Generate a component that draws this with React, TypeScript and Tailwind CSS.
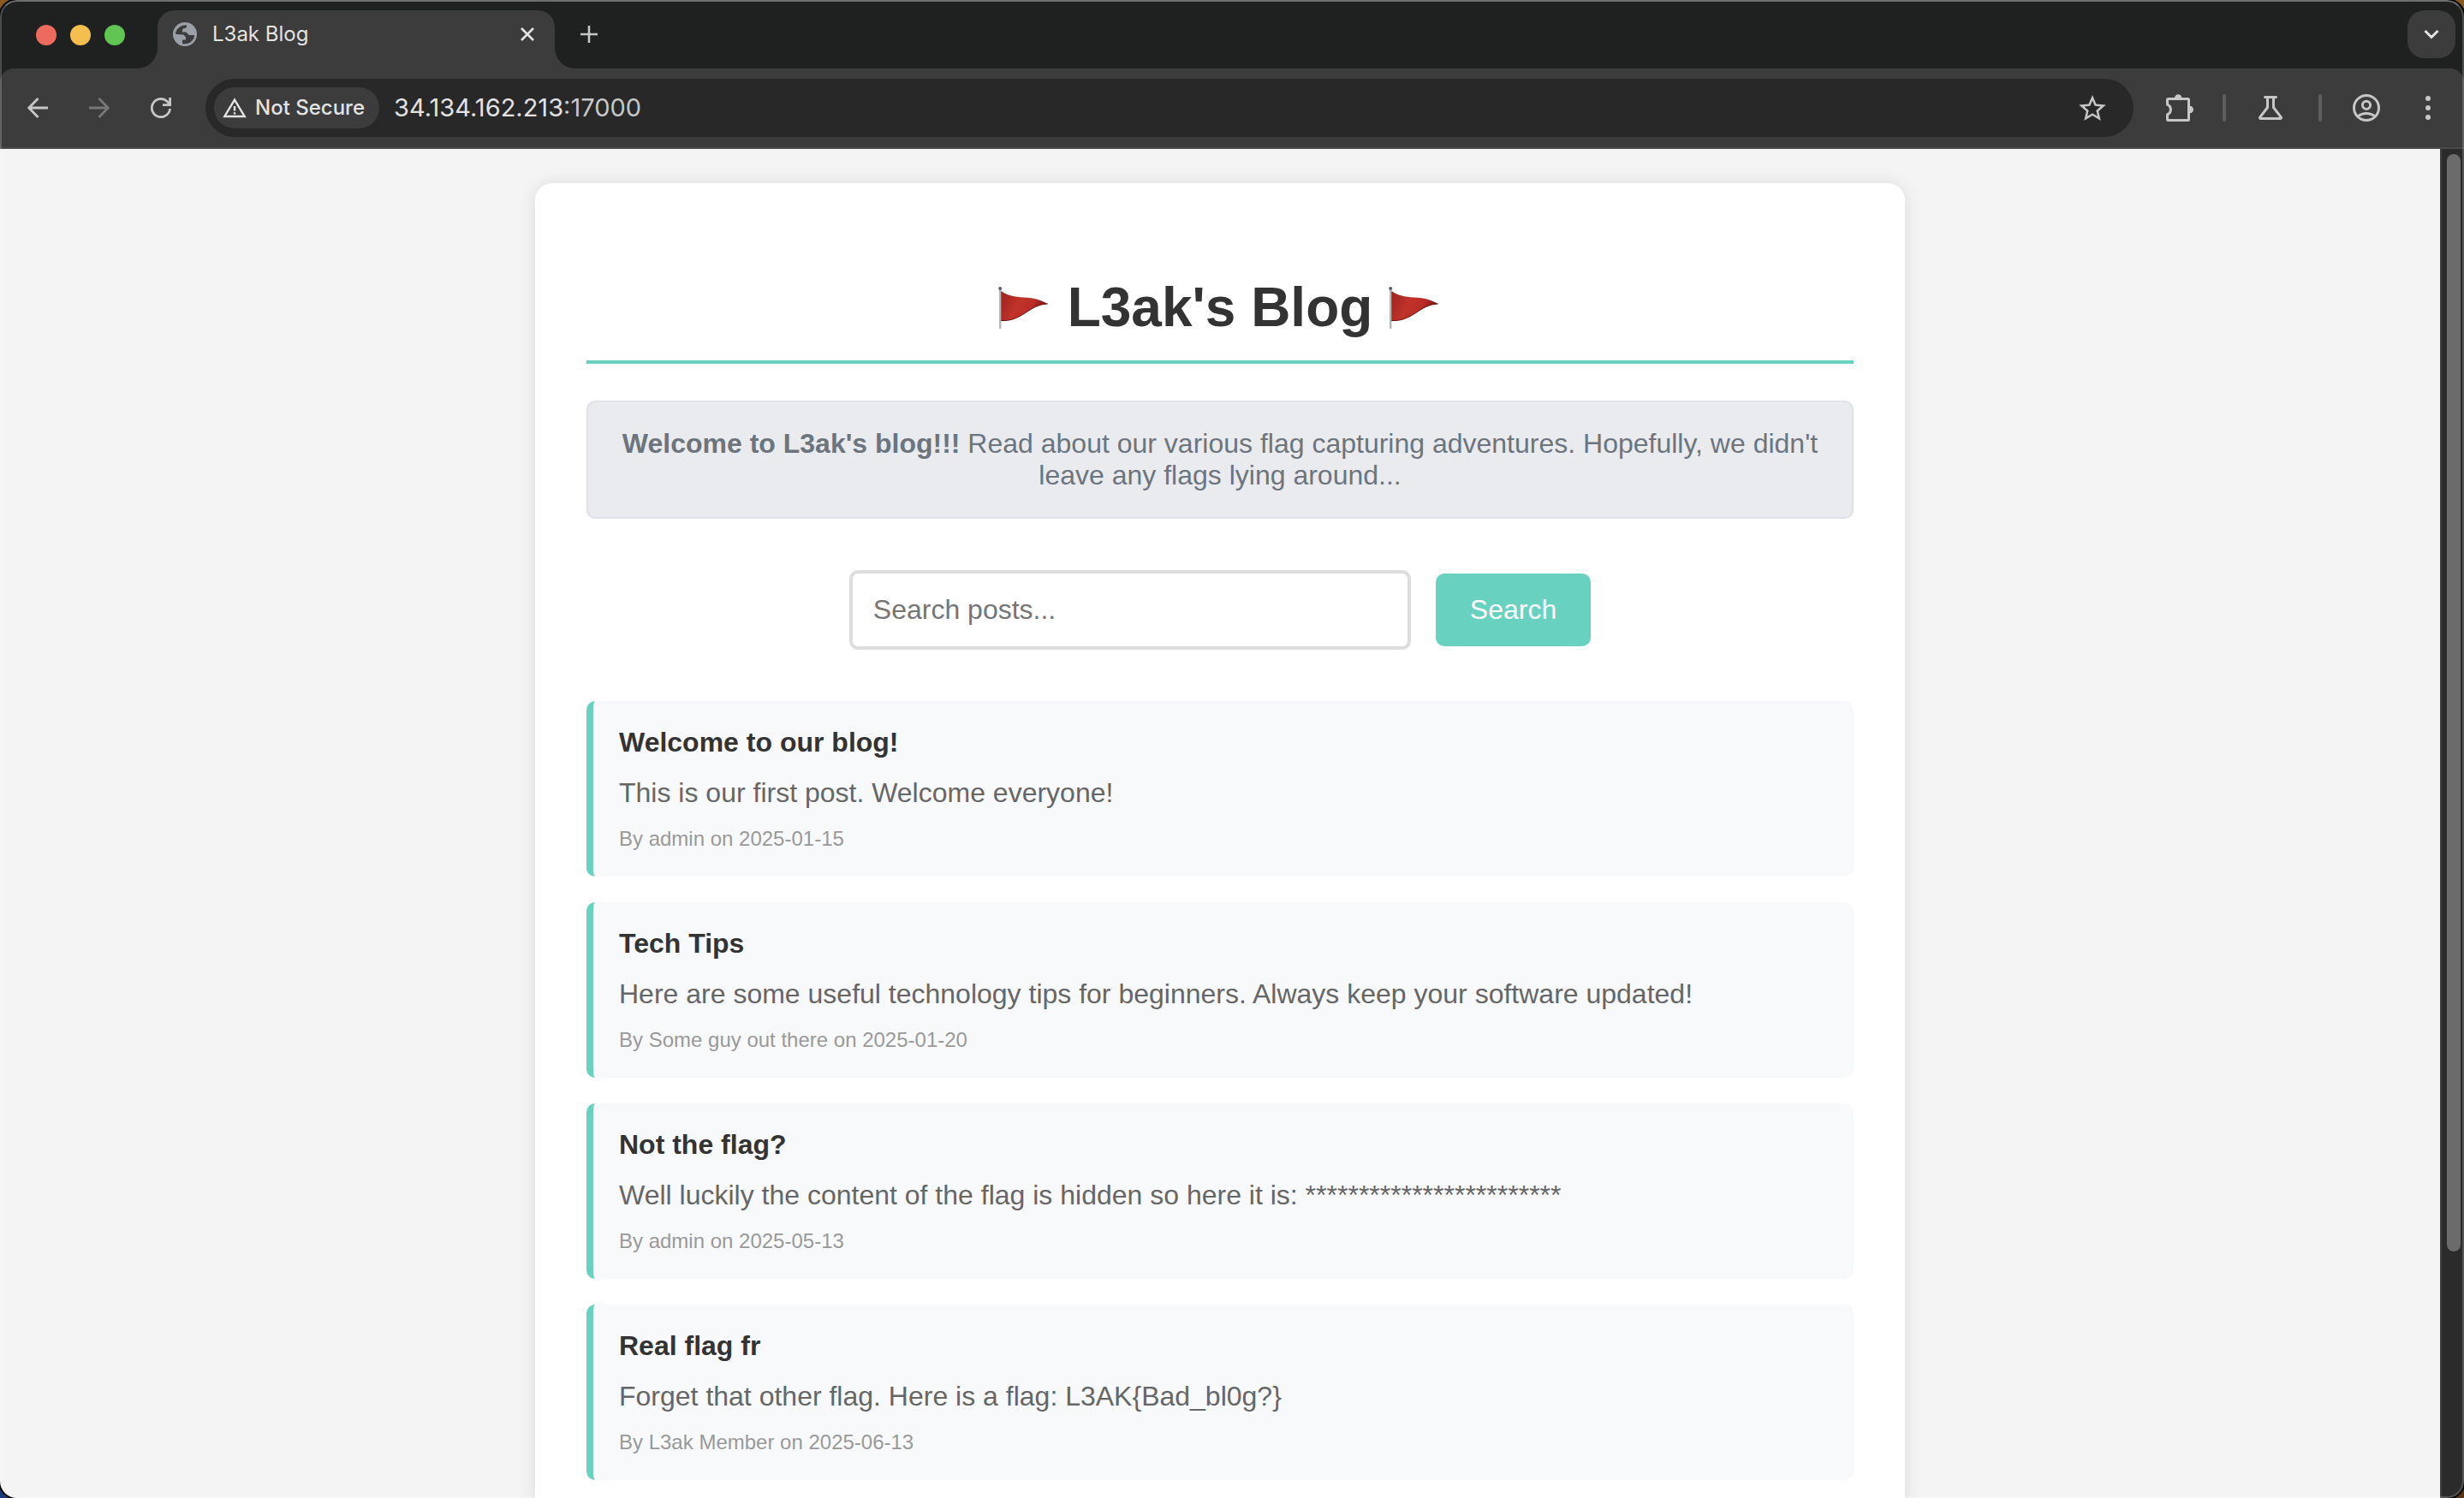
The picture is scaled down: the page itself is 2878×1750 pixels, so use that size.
import React from "react";

const posts = [
  { title: "Welcome to our blog!", body: "This is our first post. Welcome everyone!", meta: "By admin on 2025-01-15" },
  { title: "Tech Tips", body: "Here are some useful technology tips for beginners. Always keep your software updated!", meta: "By Some guy out there on 2025-01-20" },
  { title: "Not the flag?", body: "Well luckily the content of the flag is hidden so here it is: ************************", meta: "By admin on 2025-05-13" },
  { title: "Real flag fr", body: "Forget that other flag. Here is a flag: L3AK{Bad_bl0g?}", meta: "By L3ak Member on 2025-06-13" },
];

function Flag({ id }: { id: string }) {
  return (
    <svg viewBox="0 0 64 64" className="h-16 w-16 shrink-0" role="img" aria-label="Red flag">
      <defs>
        <linearGradient id={id} x1="0" y1="0" x2="1" y2="0.3">
          <stop offset="0" stopColor="#9c231c" />
          <stop offset="0.45" stopColor="#c0332b" />
          <stop offset="0.75" stopColor="#b92d26" />
          <stop offset="1" stopColor="#7d120e" />
        </linearGradient>
      </defs>
      <rect x="2" y="10" width="2.400" height="47" fill="#b4b7ba" />
      <circle cx="3.200" cy="10" r="2" fill="#55606b" />
      <path d="M4.200 13c7 5 16 7 27 7.500 12 .5 18 2.500 27.500 7.500-11 .5-17 4.500-26 10.500-11 7-18 9.500-28.500 9z" fill={`url(#${id})`} />
      <path d="M58.700 28c-11 .5-17 4.500-26 10.500-11 7-18 9.500-28.500 9" fill="none" stroke="#6e0f0b" strokeWidth="1" />
    </svg>
  );
}

function Divider() {
  return <div className="h-8 w-1 rounded-full bg-[#5e5e5e]" />;
}

function TabStrip() {
  return (
    <div className="flex h-20 items-start bg-[#1f2120] pr-[10px] pt-[2px]">
      <div className="flex gap-4 pl-[42px] pt-[27px]">
        <button aria-label="Close window" className="size-6 rounded-full bg-[#ed6a5e]" />
        <button aria-label="Minimize window" className="size-6 rounded-full bg-[#f5bf4f]" />
        <button aria-label="Zoom window" className="size-6 rounded-full bg-[#61c554]" />
      </div>
      <div className="relative ml-[38px] mt-[10px] flex h-[68px] w-[464px] items-start rounded-t-[20px] bg-[#3c3c3c] pl-[18px] pr-6 pt-[14px]">
        <svg viewBox="0 0 24 24" className="absolute bottom-0 right-full size-6" fill="#3c3c3c" aria-hidden="true"><path d="M24 0v24H0A24 24 0 0 0 24 0z" /></svg>
        <svg viewBox="0 0 24 24" className="absolute bottom-0 left-full size-6" fill="#3c3c3c" aria-hidden="true"><path d="M0 0v24h24A24 24 0 0 1 0 0z" /></svg>
        <svg viewBox="0 0 28 28" className="size-7 shrink-0" aria-hidden="true">
          <circle cx="14" cy="14" r="14" fill="#9aa0a6" />
          <path d="M3 14C3 8 8.500 3.200 16 3.200V5.500L14.500 7H12.500L11 9V11.500H15.500L17 13.500 19 15H25C25 21 20 25.200 14 25.200H11V20.500H15V17.500L12.500 14.500z" fill="#3c3c3c" />
        </svg>
        <span className="ml-[18px] grow text-[24px] leading-7 text-[#e3e3e3]">L3ak Blog</span>
        <button aria-label="Close tab" className="mt-[6px] size-4">
          <svg viewBox="0 0 16 16" className="size-4" stroke="#e3e3e3" strokeWidth="2.600" fill="none"><path d="M1 1l14 14M15 1L1 15" /></svg>
        </button>
      </div>
      <button aria-label="New tab" className="ml-[30px] mt-7 size-5">
        <svg viewBox="0 0 20 20" className="size-5" stroke="#c7c7c7" strokeWidth="2.600" fill="none"><path d="M10 0v20M0 10h20" /></svg>
      </button>
      <button aria-label="Search tabs" className="ml-auto mt-[10px] flex size-14 items-center justify-center rounded-[20px] bg-[#3c3c3c]">
        <svg viewBox="0 0 18 12" className="h-3 w-[18px]" stroke="#e3e3e3" strokeWidth="3" fill="none"><path d="M1.500 2L9 9.500 16.500 2" /></svg>
      </button>
    </div>
  );
}

function Toolbar() {
  return (
    <div className="bg-[#1f2120]">
      <div className="flex h-[94px] items-center rounded-t-[16px] border-b-2 border-[#4a4a4a] bg-[#3c3c3c] pl-8 pr-[39px] text-[#c7c7c7]">
        <button aria-label="Back">
          <svg viewBox="0 0 24 24" className="size-6" stroke="currentColor" strokeWidth="2.800" fill="none"><path d="M12.500 1L1.800 12l10.700 11M2 12h22" /></svg>
        </button>
        <button aria-label="Forward" className="ml-12 text-[#777777]">
          <svg viewBox="0 0 24 24" className="size-6" stroke="currentColor" strokeWidth="2.800" fill="none"><path d="M11.500 1l10.700 11-10.700 11M22 12H0" /></svg>
        </button>
        <button aria-label="Reload" className="ml-12">
          <svg viewBox="0 0 24 24" className="size-6" stroke="currentColor" strokeWidth="2.800" fill="none"><path d="M22.500 13A10.600 10.600 0 1 1 19 4.200L22.300 8M22.600 0v8.600H14" /></svg>
        </button>
        <div className="ml-10 flex h-[68px] grow items-center rounded-full bg-[#282828] pl-[10px] pr-8">
          <button className="flex h-12 items-center gap-[10px] rounded-full bg-[#3c3c3c] pl-[10px] pr-[17px] text-[24px] font-medium text-[#e3e3e3]">
            <svg viewBox="0 0 28 24" className="h-6 w-7" fill="none" stroke="currentColor" strokeWidth="2.400" aria-hidden="true"><path d="M14 2.600L2.300 22h23.400z" /><path d="M14 10v5.500M14 17.300v2.200" /></svg>
            Not Secure
          </button>
          <div className="ml-[17px] grow text-[29px] leading-9 text-[#e3e3e3]">34.134.162.213<span className="text-[#c7c7c7]">:17000</span></div>
          <button aria-label="Bookmark this page">
            <svg viewBox="2 2 20 19" className="h-[30px] w-8" fill="currentColor"><path d="m22 9.240-7.190-.62L12 2 9.190 8.630 2 9.240l5.460 4.730L5.820 21 12 17.270 18.180 21l-1.630-7.030zM12 15.400l-3.760 2.270 1-4.280-3.320-2.880 4.380-.38L12 6.100l1.710 4.040 4.380.38-3.320 2.880 1 4.280z" /></svg>
          </button>
        </div>
        <button aria-label="Extensions" className="ml-[38px]">
          <svg viewBox="0 0 32 32" className="size-8" fill="none" stroke="currentColor" strokeWidth="3" strokeLinejoin="round"><path d="M1.500 12.200V6.500Q1.500 5.500 2.500 5.500H25.500Q26.500 5.500 26.500 6.500V29.500Q26.500 30.500 25.500 30.500H2.500Q1.500 30.500 1.500 29.500V23.800C3.900 22.800 5.400 20.700 5.400 18S3.900 13.200 1.500 12.200z" /><path d="M10 4.500a4.200 4.200 0 0 1 8.400 0zM27.700 13.700a4.300 4.300 0 0 1 0 8.600z" fill="currentColor" stroke="none" /></svg>
        </button>
        <div className="ml-[34px]"><Divider /></div>
        <button aria-label="Labs" className="ml-[38px]">
          <svg viewBox="0 0 28 28" className="size-7" fill="none" stroke="currentColor" strokeWidth="3" strokeLinejoin="round"><path d="M7.500 1.500h13" strokeLinecap="round" /><path d="M10.500 2v11.500L1.800 24.800c-.6 1-.2 1.700.8 1.700h22.800c1 0 1.400-.7.800-1.700L17.500 13.500V2" /></svg>
        </button>
        <div className="ml-[42px]"><Divider /></div>
        <button aria-label="Profile" className="ml-9">
          <svg viewBox="0 0 32 32" className="size-8" fill="none" stroke="currentColor" strokeWidth="3"><circle cx="16" cy="16" r="14.500" /><circle cx="16" cy="12.800" r="4.600" /><path d="M6 26c3-2.500 6.500-3.500 10-3.500s7 1 10 3.500" /></svg>
        </button>
        <button aria-label="Menu" className="ml-[53px]">
          <svg viewBox="0 0 6 28" className="h-7 w-[6px]" fill="currentColor"><circle cx="3" cy="3" r="3" /><circle cx="3" cy="14" r="3" /><circle cx="3" cy="25" r="3" /></svg>
        </button>
      </div>
    </div>
  );
}

export default function App() {
  return (
    <div className="h-screen bg-[#5a3410] bg-[linear-gradient(180deg,#8a5a22_50%,transparent_50%),linear-gradient(90deg,#1b3a7a_50%,#5a3410_50%)]">
      <div className="relative flex h-full flex-col overflow-hidden rounded-[20px] bg-[#1f2120] font-['Inter',sans-serif] shadow-[0_0_0_2px_#000000]">
        <TabStrip />
        <Toolbar />
        <div className="flex min-h-0 grow">
          <main className="grow overflow-hidden bg-[#f4f4f4] pt-10 font-['Liberation_Sans',Arial,sans-serif] text-[32px] leading-[37px]">
            <div className="mx-auto w-full max-w-[1600px] rounded-[20px] bg-white p-[60px] shadow-[0_0_20px_rgba(0,0,0,0.1)]">
              <h1 className="mt-12 flex items-center justify-center gap-[18px] border-b-4 border-[#68d1bf] pb-[25px] text-[64px] font-bold leading-[74px] text-[#333333]">
                <Flag id="flag-left" />
                <span>L3ak's Blog</span>
                <Flag id="flag-right" />
              </h1>
              <p className="mt-[43px] rounded-[10px] border-2 border-[#dee2e6] bg-[#e9ebef] p-[30px] text-center text-[#6c757d]">
                <strong>Welcome to L3ak's blog!!!</strong> Read about our various flag capturing adventures. Hopefully, we didn't leave any flags lying around...
              </p>
              <form className="mt-[60px] flex items-center justify-center gap-[29px]" onSubmit={(e) => e.preventDefault()}>
                <input type="text" aria-label="Search posts" placeholder="Search posts..." className="h-[93px] w-[656px] rounded-[10px] border-4 border-[#dddddd] bg-white px-6 text-[#333333] placeholder:text-[#757575]" />
                <button type="submit" className="rounded-[10px] bg-[#68d1bf] px-10 py-6 text-white">Search</button>
              </form>
              <div className="mt-[60px] flex flex-col gap-[30px]">
                {posts.map((p) => (
                  <article key={p.title} className="rounded-[10px] border-l-8 border-[#68d1bf] bg-[#f8f9fb] p-[30px]">
                    <h2 className="font-bold text-[#333333]">{p.title}</h2>
                    <p className="mt-[22px] text-[#666666]">{p.body}</p>
                    <p className="mt-[21px] text-[24px] leading-7 text-[#999999]">{p.meta}</p>
                  </article>
                ))}
              </div>
            </div>
          </main>
          <div className="w-7 shrink-0 border-l-2 border-[#3f3f3f] bg-[#2b2b2b] pl-[6px] pt-[6px]" aria-hidden="true">
            <div className="h-[calc(100%-288px)] w-4 rounded-full bg-[#6b6b6b]" />
          </div>
        </div>
        <div className="pointer-events-none absolute inset-0 rounded-[20px] border-2 border-white/20 border-t-white/35" aria-hidden="true" />
      </div>
    </div>
  );
}
